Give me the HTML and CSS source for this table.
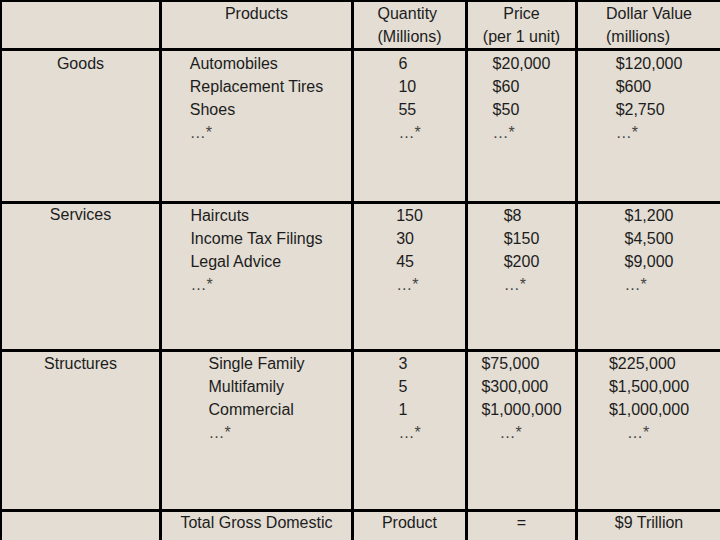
FILE: index.html
```html
<!DOCTYPE html>
<html>
<head>
<meta charset="utf-8">
<link rel="stylesheet" href="styles.css">
</head>
<body>
<div class="sheet">
  <div class="cell head"></div>
  <div class="cell head">Products</div>
  <div class="cell head"><span class="stack">Quantity<br>(Millions)</span></div>
  <div class="cell head">Price<br>(per 1 unit)</div>
  <div class="cell head"><span class="stack">Dollar Value<br>(millions)</span></div>

  <div class="cell r1">Goods</div>
  <div class="cell r1"><span class="stack">Automobiles<br>Replacement Tires<br>Shoes<br><span class="more">…*</span></span></div>
  <div class="cell r1"><span class="stack">6<br>10<br>55<br><span class="more">…*</span></span></div>
  <div class="cell r1"><span class="stack">$20,000<br>$60<br>$50<br><span class="more">…*</span></span></div>
  <div class="cell r1"><span class="stack">$120,000<br>$600<br>$2,750<br><span class="more">…*</span></span></div>

  <div class="cell up">Services</div>
  <div class="cell up"><span class="stack">Haircuts<br>Income Tax Filings<br>Legal Advice<br><span class="more">…*</span></span></div>
  <div class="cell up"><span class="stack">150<br>30<br>45<br><span class="more">…*</span></span></div>
  <div class="cell up"><span class="stack">$8<br>$150<br>$200<br><span class="more">…*</span></span></div>
  <div class="cell up"><span class="stack">$1,200<br>$4,500<br>$9,000<br><span class="more">…*</span></span></div>

  <div class="cell">Structures</div>
  <div class="cell"><span class="stack">Single Family<br>Multifamily<br>Commercial<br><span class="more">…*</span></span></div>
  <div class="cell"><span class="stack">3<br>5<br>1<br><span class="more">…*</span></span></div>
  <div class="cell"><span class="stack">$75,000<br>$300,000<br>$1,000,000<br><span class="more indent">…*</span></span></div>
  <div class="cell"><span class="stack">$225,000<br>$1,500,000<br>$1,000,000<br><span class="more indent">…*</span></span></div>

  <div class="cell up"></div>
  <div class="cell up">Total Gross Domestic</div>
  <div class="cell up">Product</div>
  <div class="cell up">=</div>
  <div class="cell up">$9 Trillion</div>
</div>
</body>
</html>
```
FILE: styles.css
```css
html, body {
  margin: 0;
  padding: 0;
  width: 720px;
  height: 540px;
  overflow: hidden;
  background: #e3ddd3;
}

.sheet {
  box-sizing: border-box;
  width: 720px;
  height: 540px;
  display: grid;
  grid-template-columns: 157px 189px 111px 107px 1fr;
  grid-template-rows: 46px 150px 145px 157px 1fr;
  gap: 3px;
  padding: 2px 0 0 2px;
  background: #000;
  font-family: "Liberation Sans", Arial, sans-serif;
  font-size: 16px;
  color: #1c1c1c;
}

.cell {
  background: #e3ddd3;
  text-align: center;
  line-height: 23px;
  white-space: nowrap;
}

.r1 {
  padding-top: 1px;
}

.up {
  line-height: 22px;
  padding-top: 0;
}

.up .stack {
  line-height: 23px;
}

.stack {
  display: inline-block;
  text-align: left;
}

.more {
  color: #444;
}

.indent {
  margin-left: 18px;
}
```
